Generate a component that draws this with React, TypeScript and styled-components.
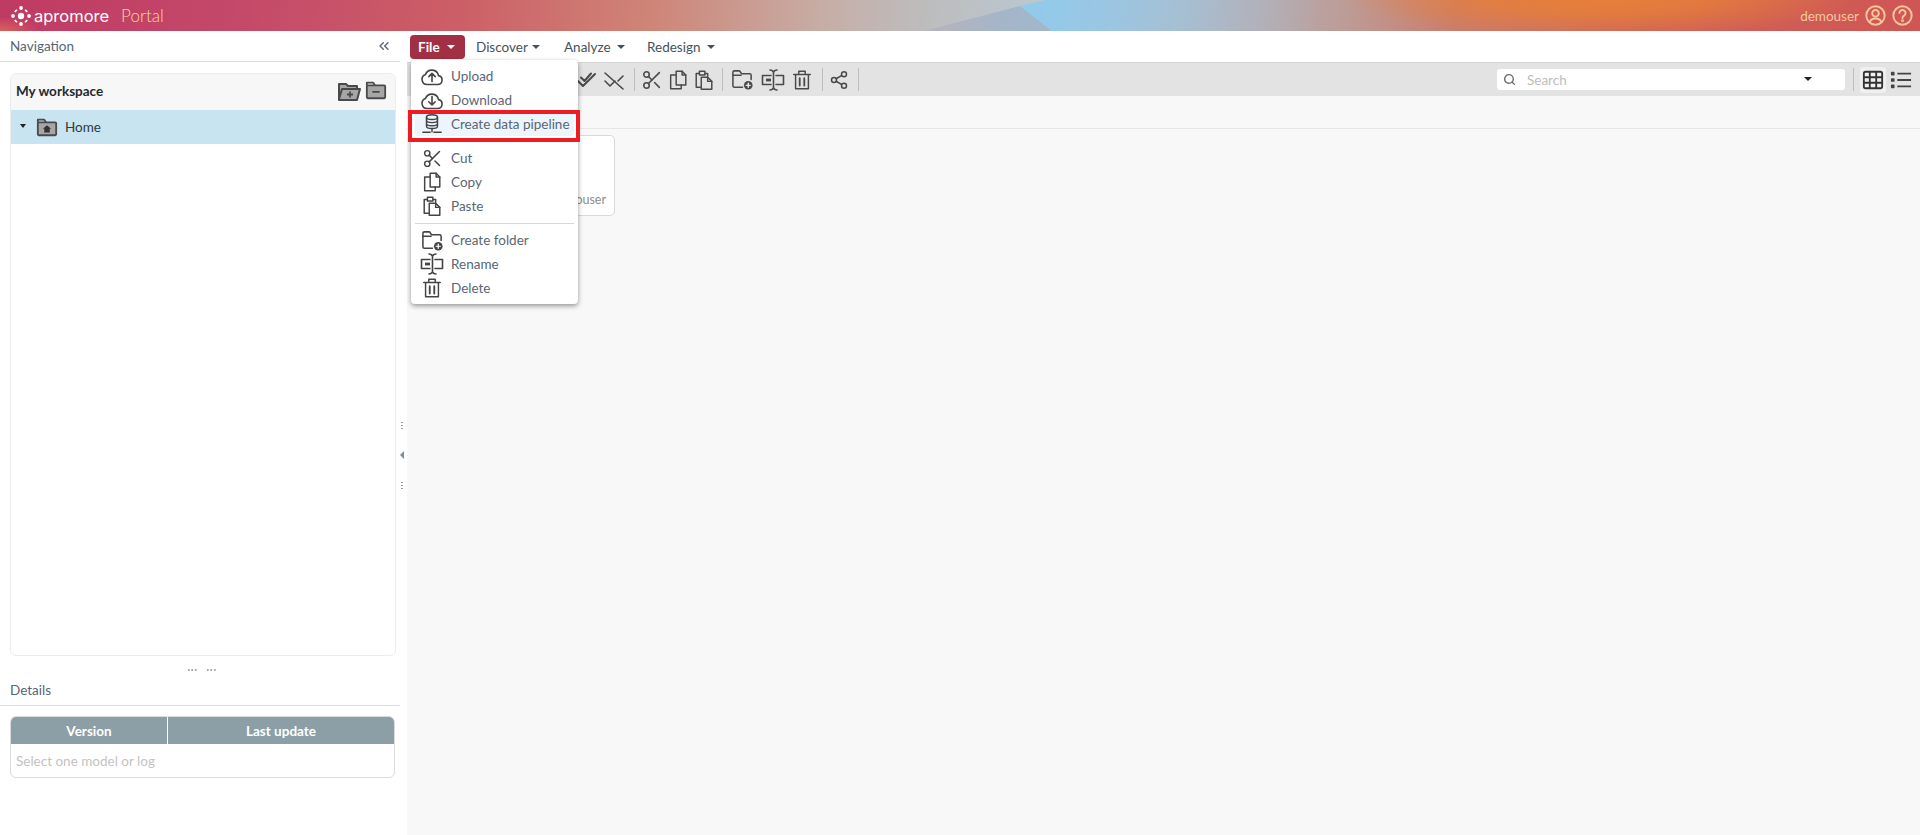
import React from "react";
import styled, { createGlobalStyle } from "styled-components";
import { Scissors, Search, Share2, ChevronsLeft } from "lucide-react";

const Global = createGlobalStyle`
  html, body { margin: 0; padding: 0; height: 100%; background: #fff; }
  body { font-family: Lato, "Noto Sans", "Liberation Sans", sans-serif; font-size: 13.5px; color: #44525e; overflow: hidden; }
  * { box-sizing: border-box; }
`;

const Page = styled.div`
  width: 100%;
  height: 835px;
  display: flex;
  flex-direction: column;
  overflow: hidden;
`;

const Header = styled.header`
  position: relative;
  flex: 0 0 31px;
  display: flex;
  align-items: center;
  padding: 0 7px 0 11px;
  overflow: hidden;
  background:
    radial-gradient(ellipse 260px 42px at 1600px -4px, rgba(232, 128, 56, 1) 0%, rgba(232, 128, 56, 0.75) 45%, rgba(232, 128, 56, 0) 100%),
    radial-gradient(ellipse 40px 14px at 0 31px, rgba(230, 115, 85, 0.7) 0%, rgba(230, 115, 85, 0) 100%),
    linear-gradient(94deg, #bf3a62 0%, #c4486a 12%, #cc5f66 24%, #cf8578 34%, #c6aea6 43%, #bdbcbc 48%, #b9c8d0 54%, #aebbc6 62%, #bd9c97 70%, #ca7c6c 76%, #cf6258 86%, #cf5655 100%);
  &::before {
    content: "";
    position: absolute;
    left: 1015px;
    top: 0;
    width: 300px;
    height: 31px;
    background: linear-gradient(100deg, #8fcbee 0%, #9ac6e2 30%, rgba(170, 185, 205, 0.5) 70%, rgba(180, 170, 180, 0) 100%);
    clip-path: polygon(31px 0, 300px 0, 300px 31px, 37px 31px, 5px 6px);
  }
  &::after {
    content: "";
    position: absolute;
    left: 920px;
    top: 0;
    width: 140px;
    height: 31px;
    background: linear-gradient(90deg, #b8b3bb 0%, #a6b5c8 55%, #9fb8cd 100%);
    clip-path: polygon(4px 31px, 100px 6px, 132px 31px);
  }
`;

const Brand = styled.div`
  position: relative;
  z-index: 1;
  display: flex;
  align-items: center;
  flex: 1;
`;

const BrandName = styled.span`
  color: #fff;
  font-family: Inter, Lato, sans-serif;
  font-size: 16.500px;
  font-weight: 400;
  margin-left: 3px;
`;

const BrandPortal = styled.span`
  color: #fbd79a;
  font-family: Lato, sans-serif;
  font-size: 17px;
  font-weight: 300;
  margin-left: 12px;
`;

const UserArea = styled.div`
  position: relative;
  z-index: 1;
  display: flex;
  align-items: center;
  color: #f5c79a;
  font-size: 13.500px;
  gap: 6px;
`;

const Body = styled.div`
  flex: 1;
  display: flex;
  min-height: 0;
`;

const Left = styled.aside`
  flex: 0 0 400px;
  display: flex;
  flex-direction: column;
`;

const PanelHead = styled.div`
  height: 31px;
  flex: 0 0 auto;
  display: flex;
  align-items: center;
  justify-content: space-between;
  padding: 0 8px 0 10px;
  border-bottom: 1px solid #dcdcdc;
  color: #566675;
  font-size: 13.500px;
`;

const DetailsHead = styled(PanelHead)`
  height: 29px;
  padding-bottom: 3px;
`;

const WorkspaceCard = styled.section`
  flex: 1;
  margin: 11px 4px 0 10px;
  border: 1px solid #ececec;
  border-radius: 6px;
  overflow: hidden;
  display: flex;
  flex-direction: column;
`;

const WorkspaceTitle = styled.div`
  flex: 0 0 36px;
  background: #f7f7f7;
  display: flex;
  align-items: center;
  justify-content: space-between;
  padding: 0 8px 2px 5px;
  font-weight: 700;
  font-size: 13.500px;
  color: #1f2933;
`;

const FolderPair = styled.div`
  display: flex;
  gap: 4px;
`;

const TreeRow = styled.div`
  flex: 0 0 34px;
  background: #c7e4f0;
  display: flex;
  align-items: center;
  padding-left: 9px;
  color: #2d3a45;
  font-size: 13.500px;
`;

const TreeCaret = styled.span`
  width: 0;
  height: 0;
  border-left: 3.500px solid transparent;
  border-right: 3.500px solid transparent;
  border-top: 4px solid #222;
  margin-right: 10px;
  margin-top: -3px;
`;

const TreeLabel = styled.span`
  margin-left: 7px;
`;

const HSplit = styled.div`
  flex: 0 0 21px;
  display: flex;
  justify-content: center;
  align-items: center;
  gap: 9px;
  padding: 6px 0 0 2px;
`;

const HDots = styled.span`
  width: 10px;
  height: 2px;
  background-image: radial-gradient(circle, #a8a8a8 1px, transparent 1.100px);
  background-size: 3.500px 2px;
`;

const VersionTable = styled.div`
  margin: 10px 5px 57px 10px;
  height: 62px;
  border: 1px solid #dcdcdc;
  border-radius: 6px;
  overflow: hidden;
  flex: 0 0 auto;
`;

const TableHead = styled.div`
  height: 27px;
  display: grid;
  grid-template-columns: 157px 1fr;
  background: #8c9fa6;
  color: #fff;
  font-weight: 700;
  font-size: 13.500px;
`;

const TableCol = styled.div<{ $sep?: boolean }>`
  display: flex;
  align-items: center;
  justify-content: center;
  border-right: ${(p) => (p.$sep ? "1px solid #fff" : "none")};
`;

const TableEmpty = styled.div`
  padding: 9px 5px;
  color: #c3c3c3;
  font-size: 13.500px;
`;

const VSplit = styled.div`
  flex: 0 0 7px;
  background: #fff;
  display: flex;
  flex-direction: column;
  align-items: center;
  padding: 390px 3px 0 0;
  gap: 22px;
`;

const VDots = styled.span`
  width: 2px;
  height: 8px;
  background-image: radial-gradient(circle, #9a9a9a 0.900px, transparent 1px);
  background-size: 2px 3px;
`;

const VArrow = styled.span`
  width: 0;
  height: 0;
  border-top: 4px solid transparent;
  border-bottom: 4px solid transparent;
  border-right: 4px solid #7d8b96;
`;

const Main = styled.main`
  position: relative;
  flex: 1;
  min-width: 0;
  display: flex;
  flex-direction: column;
  background: #f8f8f8;
`;

const MenuBar = styled.nav`
  flex: 0 0 31px;
  background: #fff;
  display: flex;
  align-items: center;
  padding: 0 0 0 3px;
`;

const MenuButton = styled.div<{ $active?: boolean; $w: number; $gap: number }>`
  width: ${(p) => p.$w}px;
  height: 24px;
  margin-right: ${(p) => (p.$active ? 3 : 0)}px;
  border-radius: 4px;
  display: flex;
  align-items: center;
  padding-left: 8px;
  gap: ${(p) => p.$gap}px;
  color: ${(p) => (p.$active ? "#fff" : "#44525e")};
  background: ${(p) => (p.$active ? "#a23045" : "transparent")};
  font-weight: ${(p) => (p.$active ? 700 : 400)};
  font-size: 13.500px;
`;

const Caret = styled.span<{ $light?: boolean }>`
  width: 0;
  height: 0;
  border-left: 4px solid transparent;
  border-right: 4px solid transparent;
  border-top: 4px solid ${(p) => (p.$light ? "#fff" : "#44525e")};
`;

const Toolbar = styled.div`
  flex: 0 0 34px;
  background: #e3e3e3;
  border-top: 1px solid #d4d4d4;
  display: flex;
  align-items: center;
  padding: 0 0 0 167px;
  color: #444;
`;

const ToolIcon = styled.span<{ $w?: number }>`
  width: ${(p) => p.$w ?? 26}px;
  height: 24px;
  display: flex;
  align-items: center;
  justify-content: center;
  color: #4a4a4a;
`;

const ToolSep = styled.span<{ $l: number; $r: number }>`
  width: 1px;
  height: 23px;
  background: #bdbdbd;
  margin: 0 ${(p) => p.$r}px 0 ${(p) => p.$l}px;
`;

const SearchBox = styled.div`
  margin-left: auto;
  width: 348px;
  height: 21px;
  background: #fff;
  border-radius: 3px;
  display: flex;
  align-items: center;
  padding-left: 6px;
  color: #bdbdbd;
  font-size: 13.500px;
  position: relative;
`;

const SearchText = styled.span`
  margin-left: 11px;
`;

const SearchCaret = styled.span`
  position: absolute;
  left: 307px;
  top: 8px;
  width: 0;
  height: 0;
  border-left: 4px solid transparent;
  border-right: 4px solid transparent;
  border-top: 4px solid #222;
`;

const ViewToggle = styled.span<{ $active?: boolean }>`
  width: 26px;
  height: 26px;
  border-radius: 3px;
  display: flex;
  align-items: center;
  justify-content: center;
  margin-right: ${(p) => (p.$active ? 2 : 6)}px;
  background: ${(p) => (p.$active ? "#f0f0f0" : "transparent")};
  color: #333;
`;

const Crumbs = styled.div`
  flex: 0 0 33px;
  background: #f8f8f8;
  border-bottom: 1px solid #e6e6e6;
`;

const Content = styled.div`
  flex: 1;
  padding: 6px 0 0 6px;
`;

const FileCard = styled.div`
  width: 202px;
  height: 81px;
  background: #fff;
  border: 1px solid #d9d9d9;
  border-radius: 5px;
  display: flex;
  align-items: flex-end;
  justify-content: flex-end;
  padding: 0 8px 8px 0;
  color: #8d8d8d;
  font-size: 12.500px;
`;

const Menu = styled.div`
  position: absolute;
  left: 4px;
  top: 29px;
  width: 167px;
  height: 244px;
  padding: 4px;
  background: #fff;
  border-radius: 4px;
  box-shadow: 0 2px 5px rgba(0, 0, 0, 0.4);
  z-index: 5;
`;

const MenuRow = styled.div<{ $hl?: boolean }>`
  position: relative;
  height: 24px;
  display: flex;
  align-items: center;
  padding-left: 5px;
  gap: 7px;
  border-radius: 4px;
  color: #5a6672;
  font-size: 13.500px;
  background: ${(p) => (p.$hl ? "#ecf5fb" : "transparent")};
`;

const MenuIcon = styled.span`
  width: 24px;
  height: 24px;
  display: flex;
  align-items: center;
  justify-content: center;
  color: #444;
`;

const MenuDivider = styled.div`
  height: 1px;
  background: #d6d6d6;
  margin: 5px 0 4px;
`;

const RedBox = styled.span`
  position: absolute;
  left: -7px;
  right: -6px;
  top: -2px;
  bottom: -6px;
  border: 4px solid #ed1c24;
  pointer-events: none;
`;

type IconProps = { s?: number };
const Svg: React.FC<{ s?: number; children: React.ReactNode }> = ({ s = 22, children }) => (
  <svg width={s} height={s} viewBox="0 0 24 24" fill="none" stroke="currentColor" strokeWidth={1.6} strokeLinecap="round" strokeLinejoin="round">
    {children}
  </svg>
);

const CloudUp = ({ s }: IconProps) => (
  <Svg s={s}>
    <path d="M7 20.500h10.500a4.500 4.500 0 0 0 1-8.900 6.800 6.800 0 0 0-13-1.200A5.200 5.200 0 0 0 7 20.500z" />
    <path d="M12 17.500V9.500M8.800 12.600 12 9.400l3.200 3.200" />
  </Svg>
);
const CloudDown = ({ s }: IconProps) => (
  <Svg s={s}>
    <path d="M7 20.500h10.500a4.500 4.500 0 0 0 1-8.900 6.800 6.800 0 0 0-13-1.200A5.200 5.200 0 0 0 7 20.500z" />
    <path d="M12 8.500v8.500M8.800 13.800 12 17l3.200-3.200" />
  </Svg>
);
const Pipeline = ({ s }: IconProps) => (
  <Svg s={s}>
    <ellipse cx="12" cy="4.500" rx="6" ry="2.500" />
    <path d="M6 4.500v10c0 1.400 2.700 2.500 6 2.500s6-1.100 6-2.500v-10M6 8c0 1.400 2.700 2.500 6 2.500S18 9.400 18 8M6 11.500C6 12.900 8.700 14 12 14s6-1.100 6-2.500" />
    <path d="M12 17v3.500M2 21h8M14 21h8" />
  </Svg>
);
const CopyIcon = ({ s }: IconProps) => (
  <Svg s={s}>
    <path d="M10 17.500V2.500h6.500l4 4v11z" />
    <path d="M16.500 2.500v4h4" />
    <path d="M10 6.500H4v15h11.500v-4" />
  </Svg>
);
const PasteIcon = ({ s }: IconProps) => (
  <Svg s={s}>
    <path d="M8 20H3.500V5H7M13 5h3v3" />
    <path d="M7 2.500h6v4H7z" />
    <path d="M9 9h7l4.500 4.500v8.500H9z" />
    <path d="M16 9v4.500h4.500" />
  </Svg>
);
const FolderAdd = ({ s }: IconProps) => (
  <Svg s={s}>
    <path d="M12 20H3.500A1.500 1.500 0 0 1 2 18.500v-14A1.500 1.500 0 0 1 3.500 3h5.500l2 3h8.500A1.500 1.500 0 0 1 21 7.500V12" />
    <path d="M2 7.500h8.500" />
    <circle cx="18" cy="18" r="4.500" fill="currentColor" stroke="none" />
    <path d="M18 15.800v4.400M15.800 18h4.400" stroke="#fff" strokeWidth={1.300} />
  </Svg>
);
const RenameIcon = ({ s }: IconProps) => (
  <Svg s={s}>
    <path d="M10 7.500H1.500v9H10M15 7.500h7.500v9H15" />
    <path d="M9 2c2 0 3 .800 3.500 2.200C13 2.800 14 2 16 2M9 22c2 0 3-.800 3.500-2.200.500 1.400 1.500 2.200 3.500 2.200M12.500 4v16" />
    <path d="M5 12h5" strokeWidth={2.800} strokeLinecap="butt" />
  </Svg>
);
const TrashIcon = ({ s }: IconProps) => (
  <Svg s={s}>
    <path d="M3 6h18M8.500 6V2.500h7V6M5 6v15.500h14V6" />
    <path d="M9.500 10v8M14.500 10v8" strokeWidth={2} />
  </Svg>
);
const CheckAll = ({ s }: IconProps) => (
  <Svg s={s}>
    <path d="M3 13l5 5L20 6M6 9.500l3.500 3.500L16 5.500" strokeWidth={2} />
  </Svg>
);
const CheckOff = ({ s }: IconProps) => (
  <Svg s={s}>
    <path d="M3 13l5 5 5-5M3 5l18 16M16 13l5-5" />
  </Svg>
);
const GridIcon = ({ s }: IconProps) => (
  <svg width={s} height={s} viewBox="0 0 24 24" fill="none" stroke="currentColor" strokeWidth={2}>
    <rect x="2" y="3" width="20" height="18" rx="2" />
    <path d="M2 9h20M2 15h20M8.500 3v18M15.500 3v18" />
  </svg>
);
const ListIcon = ({ s }: IconProps) => (
  <svg width={s} height={s} viewBox="0 0 24 24" fill="none" stroke="#444" strokeWidth={2}>
    <path d="M8 5h15M8 12h15M8 19h15" />
    <rect x="1" y="3" width="4" height="4" rx="1" fill="#444" stroke="none" />
    <rect x="1" y="10" width="4" height="4" rx="1" fill="#444" stroke="none" />
    <rect x="1" y="17" width="4" height="4" rx="1" fill="#444" stroke="none" />
  </svg>
);
const Logo = () => (
  <svg width="20" height="20" viewBox="0 0 20 20" fill="#fff">
    <circle cx="10" cy="10" r="3.200" />
    <circle cx="10" cy="2" r="1.900" />
    <circle cx="10" cy="18" r="1.900" />
    <circle cx="2" cy="10" r="1.900" />
    <circle cx="18" cy="10" r="1.900" />
    <path d="M3.800 6A7.500 7.500 0 0 1 6 3.800M14 3.800A7.500 7.500 0 0 1 16.200 6M16.200 14A7.500 7.500 0 0 1 14 16.200M6 16.200A7.500 7.500 0 0 1 3.800 14" stroke="#fff" strokeWidth="1.600" fill="none" />
  </svg>
);
const UserIcon = () => (
  <svg width="21" height="21" viewBox="0 0 24 24" fill="none" stroke="#f5c79a" strokeWidth="2.200">
    <circle cx="12" cy="12" r="10.500" />
    <circle cx="12" cy="9.500" r="3.800" />
    <path d="M5.500 19.500c1-3 3.500-4 6.500-4s5.500 1 6.500 4" />
  </svg>
);
const HelpIcon = () => (
  <svg width="21" height="21" viewBox="0 0 24 24" fill="none" stroke="#f5c79a" strokeWidth="2.200" strokeLinecap="round">
    <circle cx="12" cy="12" r="10.500" />
    <path d="M8.500 9.200a3.500 3.500 0 1 1 5.300 3c-1.200.700-1.800 1.400-1.800 2.600" />
    <circle cx="12" cy="18" r="0.600" />
  </svg>
);
const FolderGlyph: React.FC<{ w: number; mark: "home" | "plus" | "minus"; open?: boolean }> = ({ w, mark, open }) => (
  <svg width={w} height={w} viewBox="0 0 24 24" stroke="#4a4a4a" strokeWidth="2" strokeLinejoin="round">
    {open ? (
      <path d="M2 20V5h7l2 2h9v4M2 20l3-10h18l-3 11H2z" fill="#a6a6a6" />
    ) : (
      <>
        <path d="M2 7V4h7l2 3" fill="none" />
        <rect x="2" y="7" width="20" height="14" rx="1" fill="#a6a6a6" />
      </>
    )}
    {mark === "home" && <path d="M7.500 14 12 10l4.500 4h-1.500v4H9v-4z" fill="#333" stroke="none" />}
    {mark === "plus" && <path d="M10 15.500h6M13 12.500v6" strokeWidth="1.800" fill="none" />}
    {mark === "minus" && <path d="M8 14h8" strokeWidth="2" fill="none" />}
  </svg>
);

const menuGroups = [
  [
    { label: "Upload", icon: <CloudUp s={24} /> },
    { label: "Download", icon: <CloudDown s={24} /> },
    { label: "Create data pipeline", icon: <Pipeline s={22} />, hl: true },
  ],
  [
    { label: "Cut", icon: <Scissors size={21} strokeWidth={1.7} /> },
    { label: "Copy", icon: <CopyIcon s={22} /> },
    { label: "Paste", icon: <PasteIcon s={22} /> },
  ],
  [
    { label: "Create folder", icon: <FolderAdd s={23} /> },
    { label: "Rename", icon: <RenameIcon s={24} /> },
    { label: "Delete", icon: <TrashIcon s={22} /> },
  ],
];

export default function App() {
  return (
    <Page>
      <Global />
      <Header>
        <Brand>
          <Logo />
          <BrandName>apromore</BrandName>
          <BrandPortal>Portal</BrandPortal>
        </Brand>
        <UserArea>
          <span>demouser</span>
          <UserIcon />
          <HelpIcon />
        </UserArea>
      </Header>
      <Body>
        <Left>
          <PanelHead>
            <span>Navigation</span>
            <ChevronsLeft size={16} color="#566675" />
          </PanelHead>
          <WorkspaceCard>
            <WorkspaceTitle>
              <span>My workspace</span>
              <FolderPair>
                <FolderGlyph w={24} mark="plus" open />
                <FolderGlyph w={22} mark="minus" />
              </FolderPair>
            </WorkspaceTitle>
            <TreeRow>
              <TreeCaret />
              <FolderGlyph w={22} mark="home" />
              <TreeLabel>Home</TreeLabel>
            </TreeRow>
          </WorkspaceCard>
          <HSplit>
            <HDots />
            <HDots />
          </HSplit>
          <DetailsHead>
            <span>Details</span>
          </DetailsHead>
          <VersionTable>
            <TableHead>
              <TableCol $sep>Version</TableCol>
              <TableCol>Last update</TableCol>
            </TableHead>
            <TableEmpty>Select one model or log</TableEmpty>
          </VersionTable>
        </Left>
        <VSplit>
          <VDots />
          <VArrow />
          <VDots />
        </VSplit>
        <Main>
          <MenuBar>
            <MenuButton $active $w={55} $gap={7}>
              File <Caret $light />
            </MenuButton>
            <MenuButton $w={88} $gap={4}>
              Discover <Caret />
            </MenuButton>
            <MenuButton $w={83} $gap={6}>
              Analyze <Caret />
            </MenuButton>
            <MenuButton $w={90} $gap={7}>
              Redesign <Caret />
            </MenuButton>
          </MenuBar>
          <Toolbar>
            <ToolIcon><CheckAll s={24} /></ToolIcon>
            <ToolIcon $w={28}><CheckOff s={24} /></ToolIcon>
            <ToolSep $l={6} $r={4} />
            <ToolIcon><Scissors size={22} strokeWidth={1.7} /></ToolIcon>
            <ToolIcon><CopyIcon s={22} /></ToolIcon>
            <ToolIcon><PasteIcon s={22} /></ToolIcon>
            <ToolSep $l={5} $r={5} />
            <ToolIcon $w={28}><FolderAdd s={23} /></ToolIcon>
            <ToolIcon $w={34}><RenameIcon s={24} /></ToolIcon>
            <ToolIcon $w={24}><TrashIcon s={22} /></ToolIcon>
            <ToolSep $l={8} $r={4} />
            <ToolIcon $w={24}><Share2 size={20} strokeWidth={1.8} /></ToolIcon>
            <ToolSep $l={7} $r={0} />
            <SearchBox>
              <Search size={13} color="#6a6a6a" strokeWidth={2.6} />
              <SearchText>Search</SearchText>
              <SearchCaret />
            </SearchBox>
            <ToolSep $l={8} $r={6} />
            <ViewToggle $active><GridIcon s={22} /></ViewToggle>
            <ViewToggle><ListIcon s={22} /></ViewToggle>
          </Toolbar>
          <Crumbs />
          <Content>
            <FileCard>demouser</FileCard>
          </Content>
          <Menu>
            {menuGroups.map((group, i) => (
              <React.Fragment key={i}>
                {i > 0 && <MenuDivider />}
                {group.map((item) => (
                  <MenuRow key={item.label} $hl={item.hl}>
                    <MenuIcon>{item.icon}</MenuIcon>
                    {item.label}
                    {item.hl && <RedBox />}
                  </MenuRow>
                ))}
              </React.Fragment>
            ))}
          </Menu>
        </Main>
      </Body>
    </Page>
  );
}
